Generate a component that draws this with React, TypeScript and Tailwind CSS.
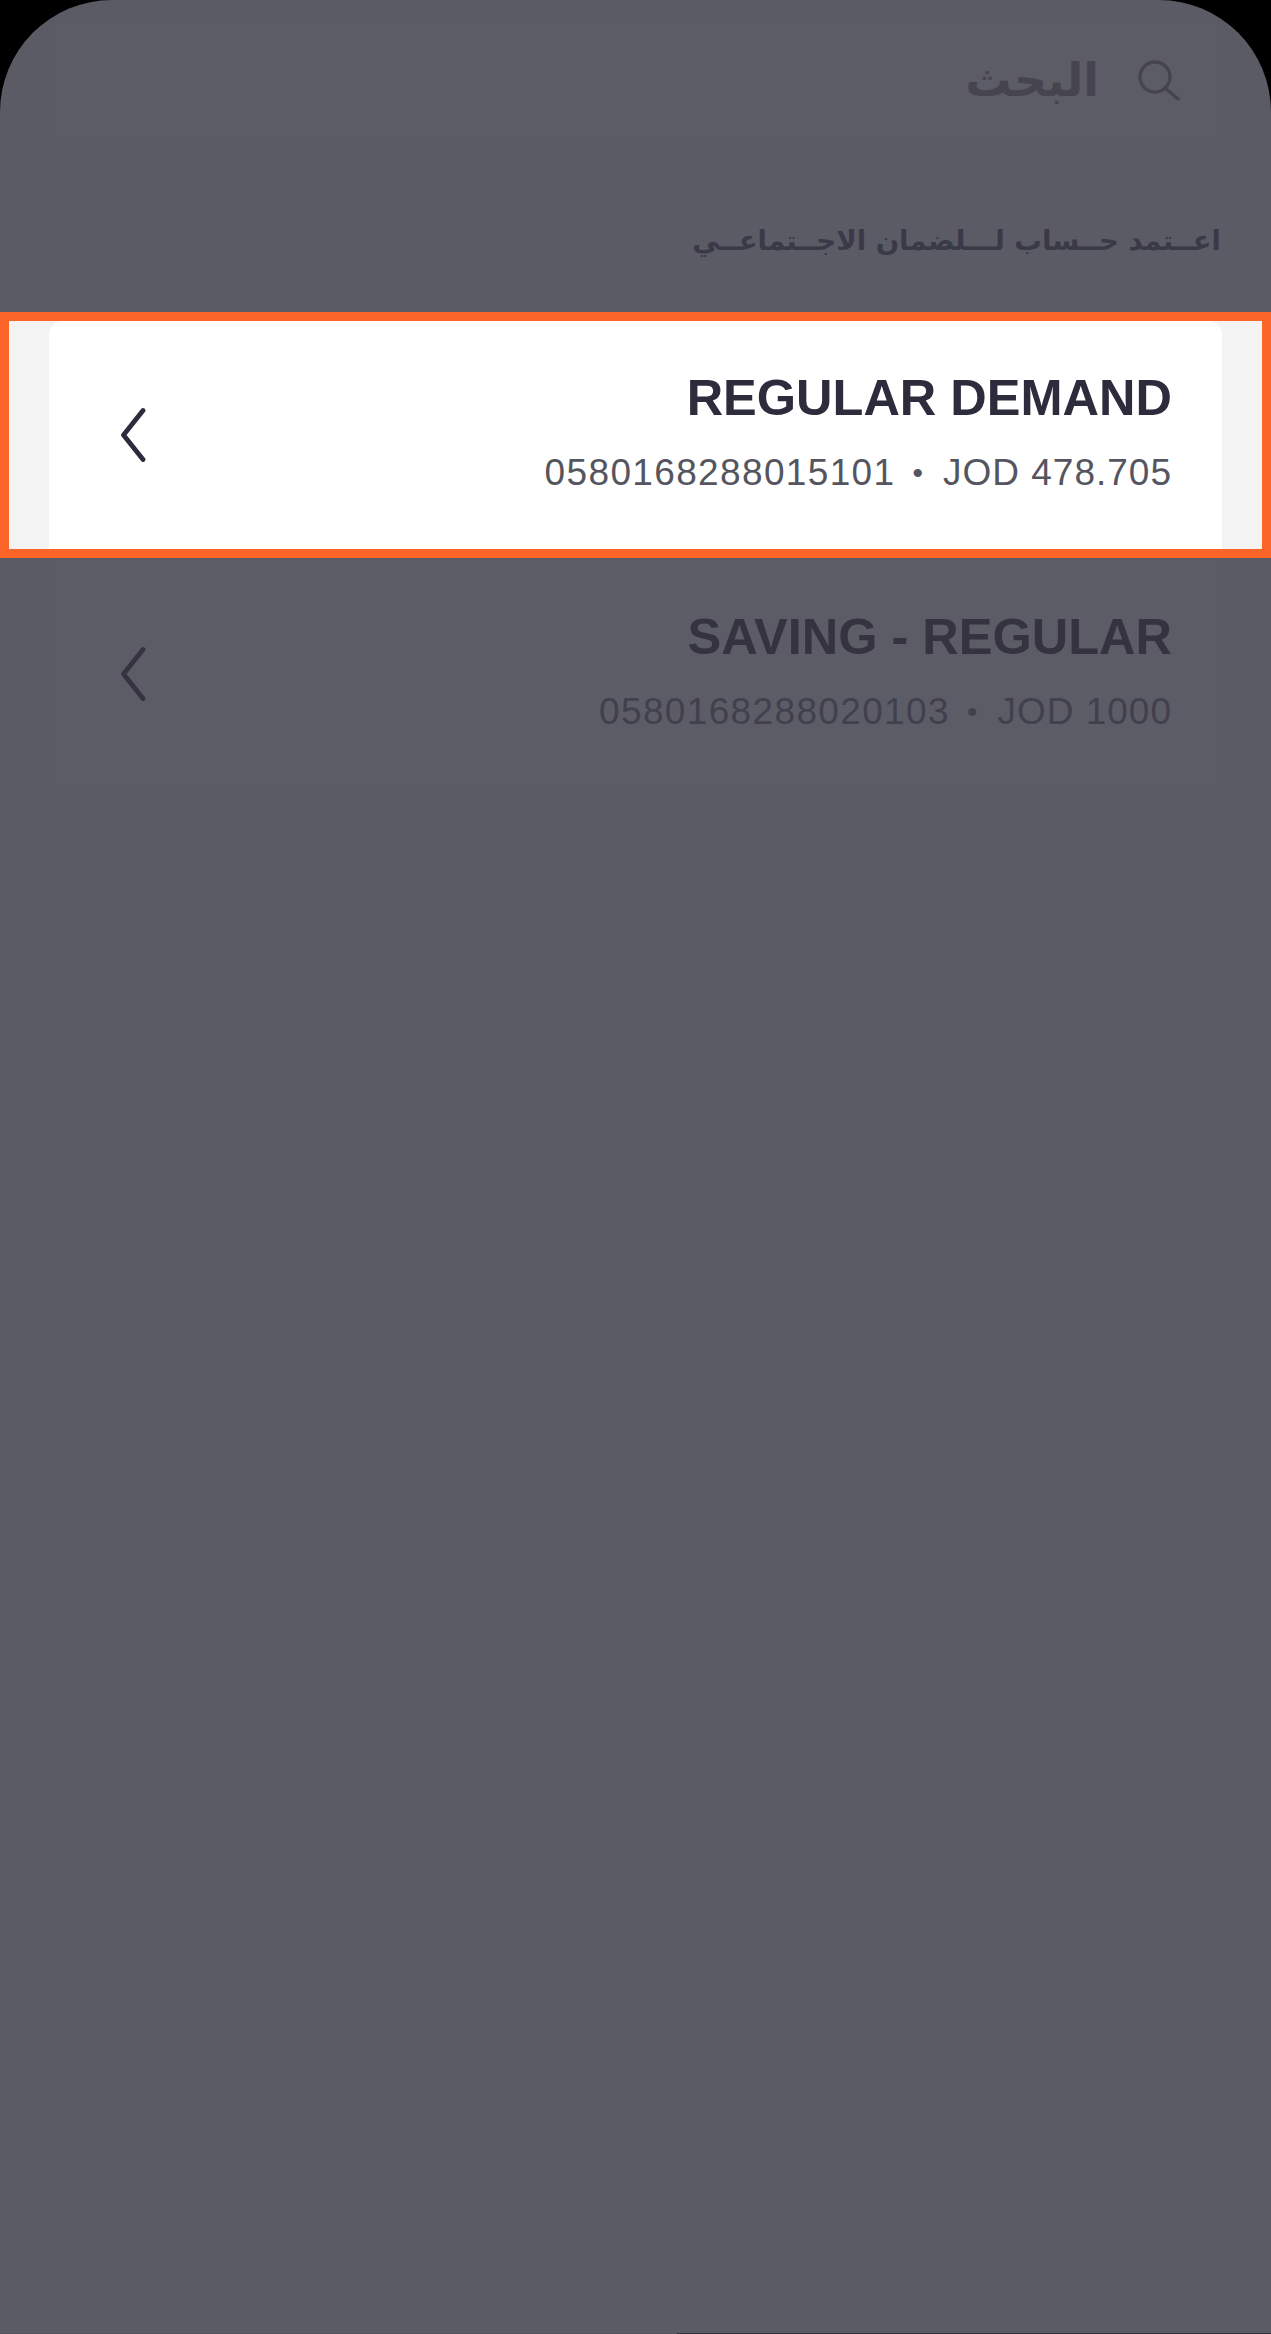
export default function App() {
  const Chevron = ({ color }: { color: string }) => (
    <svg width="26" height="56" viewBox="0 0 26 56" fill="none" className="shrink-0">
      <path d="M22 3.5 L2.5 28 L22 52.5" stroke={color} strokeWidth="4.8" strokeLinecap="round" strokeLinejoin="round" />
    </svg>
  );
  const Row = ({ title, num, amt, titleCls, subCls, icon }: { title: string; num: string; amt: string; titleCls: string; subCls: string; icon: string }) => (
    <div className="flex h-full items-center justify-between pl-[72px] pr-[50px]">
      <Chevron color={icon} />
      <div className="flex flex-col items-end">
        <div className={`text-[50.5px] leading-[60px] font-bold ${titleCls}`}>{title}</div>
        <div className={`mt-[15px] flex items-center gap-[17px] text-[37px] leading-[60px] ${subCls}`}>
          <span className="tracking-[1.35px]">{num}</span>
          <span className="text-[30px]">•</span>
          <span className="ml-[3px] tracking-[1px]">{amt}</span>
        </div>
      </div>
    </div>
  );
  return (
    <div className="w-[1271px] h-[2334px] bg-black overflow-hidden font-['Liberation_Sans',Arial,sans-serif]">
      <div className="h-[2333px] rounded-t-[112px] bg-[#5b5b65] flex flex-col">
        <div className="mx-[49px] mt-[20px] h-[120px] rounded-[16px] bg-[#5c5c66] flex items-center justify-end gap-[39px] pr-[42px]">
          <span dir="rtl" className="font-['DejaVu_Sans',sans-serif] font-bold text-[46px] leading-[60px] text-[#45444f]">البحث</span>
          <svg width="42" height="40" viewBox="0 0 42 40" fill="none" className="shrink-0">
            <circle cx="17" cy="17" r="15" stroke="#45444f" strokeWidth="3.4" />
            <path d="M27 28 L40 39" stroke="#45444f" strokeWidth="3.6" strokeLinecap="round" />
          </svg>
        </div>
        <div dir="rtl" className="mt-[70px] mr-[50px] h-[60px] font-['DejaVu_Sans',sans-serif] font-bold text-[27.5px] leading-[60px] text-[#3a3947] text-right">
          اعــتمد حــساب لـــلضمان الاجــتماعــي
        </div>
        <div className="mt-[42px] h-[246px] border-[9px] border-[#fb6529] bg-[#f3f3f3] pl-[40px] pr-[40px]">
          <div className="h-full rounded-t-[14px] bg-white">
            <Row title="REGULAR DEMAND" num="0580168288015101" amt="JOD 478.705" titleCls="text-[#2d2c3c]" subCls="text-[#555560]" icon="#2d2c3c" />
          </div>
        </div>
        <div className="mx-[49px] mt-[2px] h-[228px] rounded-b-[16px] bg-[#5c5c67]">
          <Row title="SAVING - REGULAR" num="0580168288020103" amt="JOD 1000" titleCls="text-[#34333f]" subCls="text-[#41404d]" icon="#34333f" />
        </div>
      </div>
      <div className="h-px flex justify-end bg-[#54545e]">
        <div className="w-[594px] bg-[#33333d]" />
      </div>
    </div>
  );
}
